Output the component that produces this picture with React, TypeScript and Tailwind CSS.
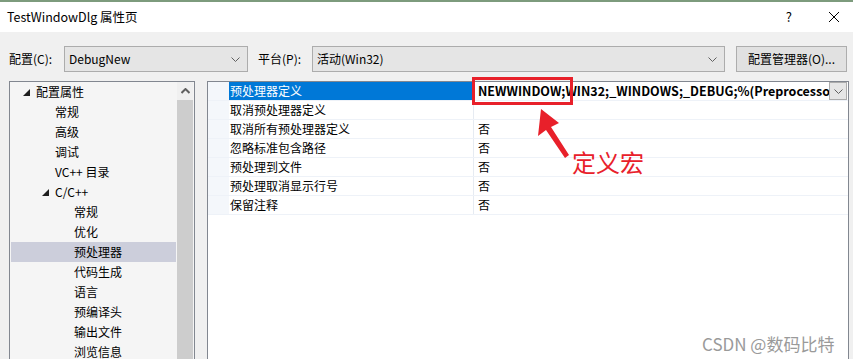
import { ReactNode } from 'react';

const font = "font-['Microsoft_YaHei_UI','Noto_Sans_CJK_SC',sans-serif]";

function Chevron({ className = '' }: { className?: string }) {
  return (
    <svg width="9" height="5" viewBox="0 0 9 5" className={className}>
      <path d="M0.5 0.5 L4.5 4.5 L8.5 0.5" fill="none" stroke="#606060" strokeWidth="1" />
    </svg>
  );
}

function Combo({ value, width }: { value: string; width: string }) {
  return (
    <div className={`${width} flex h-[26px] items-center justify-between border border-[#acacac] bg-[#e5e5e5] pl-[4px] pr-[7px]`}>
      <span className="leading-[18px]">{value}</span>
      <Chevron />
    </div>
  );
}

const tree: { label: string; indent: string; arrow?: boolean; selected?: boolean }[] = [
  { label: '配置属性', indent: 'pl-[25px]', arrow: true },
  { label: '常规', indent: 'pl-[44px]' },
  { label: '高级', indent: 'pl-[44px]' },
  { label: '调试', indent: 'pl-[44px]' },
  { label: 'VC++ 目录', indent: 'pl-[44px]' },
  { label: 'C/C++', indent: 'pl-[44px]', arrow: true },
  { label: '常规', indent: 'pl-[63px]' },
  { label: '优化', indent: 'pl-[63px]' },
  { label: '预处理器', indent: 'pl-[63px]', selected: true },
  { label: '代码生成', indent: 'pl-[63px]' },
  { label: '语言', indent: 'pl-[63px]' },
  { label: '预编译头', indent: 'pl-[63px]' },
  { label: '输出文件', indent: 'pl-[63px]' },
  { label: '浏览信息', indent: 'pl-[63px]' },
];

const props = [
  { name: '预处理器定义', value: 'NEWWINDOW;WIN32;_WINDOWS;_DEBUG;%(PreprocessorDefinitions)' },
  { name: '取消预处理器定义', value: '' },
  { name: '取消所有预处理器定义', value: '否' },
  { name: '忽略标准包含路径', value: '否' },
  { name: '预处理到文件', value: '否' },
  { name: '预处理取消显示行号', value: '否' },
  { name: '保留注释', value: '否' },
];

function TreeRow({ item }: { item: (typeof tree)[number] }): ReactNode {
  return (
    <div className={`relative flex h-[20px] items-center leading-[20px] ${item.indent} ${item.selected ? 'bg-[#cccedb]' : ''}`}>
      {item.arrow && (
        <svg width="7" height="7" viewBox="0 0 7 7" className="absolute top-[7px] -ml-[13px]">
          <path d="M7 0 L7 7 L0 7 Z" fill="#1e1e1e" />
        </svg>
      )}
      <span>{item.label}</span>
    </div>
  );
}

export default function App() {
  return (
    <div className={`relative h-[359px] w-[853px] overflow-hidden border-t-2 border-[#7d9b7d] bg-[#f0f0f0] text-[12px] leading-none text-black ${font}`}>
      <div className="flex h-[30px] items-center justify-between bg-white pl-[7px] pr-[13px]">
        <span className="text-[12.5px] leading-[18px]">TestWindowDlg 属性页</span>
        <div className="flex items-center gap-[36px]">
          <span className="text-[13px] leading-[18px]">?</span>
          <svg width="12" height="12" viewBox="0 0 12 12">
            <path d="M1 1 L11 11 M11 1 L1 11" stroke="#000" strokeWidth="1" />
          </svg>
        </div>
      </div>

      <div className="flex items-center pl-[9px] pt-[14px]">
        <span className="w-[55px] leading-[18px]">配置(C):</span>
        <Combo value="DebugNew" width="w-[184px]" />
        <span className="ml-[10px] w-[54px] leading-[18px]">平台(P):</span>
        <Combo value="活动(Win32)" width="w-[413px]" />
        <div className="ml-[11px] flex h-[26px] w-[111px] items-center justify-center border border-[#adadad] bg-[#e1e1e1] leading-[18px]">
          配置管理器(O)...
        </div>
      </div>

      <div className="mt-[9px] flex gap-[12px] pl-[9px]">
        <div className="flex h-[290px] w-[186px] border border-[#828790] bg-[#f5f5f5]">
          <div className="w-[166px] pl-[1px]">
            {tree.map((item, i) => (
              <TreeRow key={i} item={item} />
            ))}
          </div>
          <div className="ml-[1px] flex w-[16px] flex-col bg-[#f0f0f0]">
            <div className="flex h-[18px] items-center justify-center">
              <svg width="9" height="6" viewBox="0 0 9 6">
                <path d="M0.5 5 L4.5 1 L8.5 5" fill="none" stroke="#606060" strokeWidth="2" />
              </svg>
            </div>
            <div className="flex-1 bg-[#cdcdcd]" />
          </div>
        </div>

        <div className="h-[290px] w-[642px] border border-[#828790] bg-white">
          {props.map((p, i) => (
            <div key={i} className="flex h-[19px] border-b border-[#eef2f8] leading-[18px]">
              <div className="w-[21px] bg-[#f4f7fb]" />
              <div className={`flex w-[245px] items-center border-r border-[#e6ebf2] pl-[1px] ${i === 0 ? 'bg-[#0078d7] text-white' : ''}`}>
                {p.name}
              </div>
              <div className="flex min-w-0 flex-1 items-center">
                <span className={`min-w-0 flex-1 overflow-hidden whitespace-nowrap pl-[4px] leading-[18px] ${i === 0 ? 'font-bold text-[12.5px]' : ''}`}>
                  {p.value}
                </span>
                {i === 0 && (
                  <div className="mr-[1px] flex h-[18px] w-[18px] items-center justify-center border border-[#acacac] bg-[#e6e6e6]">
                    <Chevron />
                  </div>
                )}
              </div>
            </div>
          ))}
        </div>
      </div>

      <div className="pointer-events-none absolute left-[472px] top-[75px] h-[28px] w-[101px] border-[3px] border-[#e8202a]" />
      <svg className="pointer-events-none absolute left-0 top-0" width="853" height="359" viewBox="0 0 853 359">
        <path d="M541 107 L538 134 L546 128 L565 156 L569 153 L551 125 L559 121 Z" fill="#e8202a" />
      </svg>
      <span className="pointer-events-none absolute left-[572px] top-[146px] text-[24px] leading-[28px] text-[#e8202a]">定义宏</span>
      <span className="pointer-events-none absolute left-[702px] top-[331px] text-[17px] leading-[22px] text-[#9a9a9a] font-['Noto_Sans_CJK_SC',sans-serif]">
        CSDN @数码比特
      </span>
    </div>
  );
}
